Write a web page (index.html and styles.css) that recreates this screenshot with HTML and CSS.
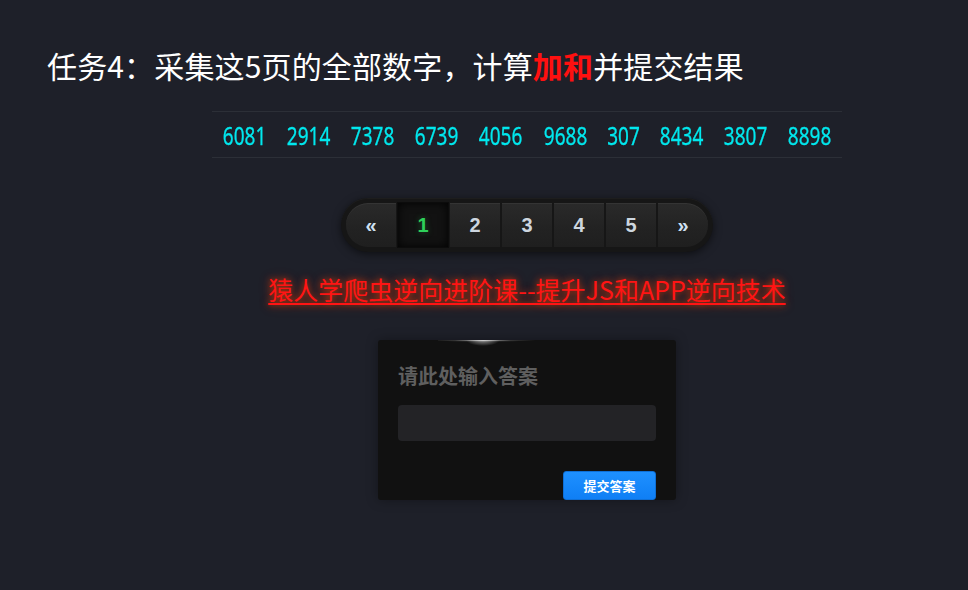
FILE: index.html
```html
<!DOCTYPE html>
<html lang="zh-CN">
<head>
<meta charset="utf-8">
<title>任务4</title>
<link rel="stylesheet" href="styles.css">
</head>
<body>
<h1 class="title">任务4：采集这5页的全部数字，计算<span class="hl">加和</span>并提交结果</h1>
<main class="main">
  <table class="nums">
    <tr>
      <td><span>6081</span></td>
      <td><span>2914</span></td>
      <td><span>7378</span></td>
      <td><span>6739</span></td>
      <td><span>4056</span></td>
      <td><span>9688</span></td>
      <td class="short"><span>307</span></td>
      <td><span>8434</span></td>
      <td><span>3807</span></td>
      <td><span>8898</span></td>
    </tr>
  </table>

  <nav class="pager">
    <a class="pg first">&laquo;</a>
    <a class="pg active">1</a>
    <a class="pg">2</a>
    <a class="pg">3</a>
    <a class="pg">4</a>
    <a class="pg">5</a>
    <a class="pg last">&raquo;</a>
  </nav>

  <a class="course">猿人学爬虫逆向进阶课--提升JS和APP逆向技术</a>

  <form class="card">
    <label class="card-label">请此处输入答案</label>
    <input class="card-input" type="text">
    <div class="card-foot">
      <button class="card-btn" type="button">提交答案</button>
    </div>
  </form>
</main>
</body>
</html>
```
FILE: styles.css
```css
* { box-sizing: border-box; }
html, body { margin: 0; padding: 0; }
body {
  background: #1e2029;
  font-family: "Noto Sans CJK SC", "Noto Sans", sans-serif;
  color: #fff;
  width: 968px;
  height: 590px;
  overflow: hidden;
}
.title {
  margin: 0;
  padding: 43px 0 0 47px;
  font-size: 30px;
  line-height: 44px;
  font-weight: 400;
  letter-spacing: 0.15px;
  color: #fff;
}
.hl { color: #ff1010; font-weight: 700; }

.main {
  padding-left: 86px;
  display: flex;
  flex-direction: column;
  align-items: center;
}

.nums {
  margin-top: 24px;
  width: 630px;
  border-collapse: collapse;
  table-layout: fixed;
}
.nums td {
  height: 46px;
  border-top: 1px solid #2c2f37;
  border-bottom: 1px solid #2c2f37;
  text-align: center;
  padding: 0;
  font-family: "Noto Sans", sans-serif;
  font-size: 25px;
  color: #00e8ee;
}
.nums td.short { width: 52px; }
.nums td span {
  display: inline-block;
  transform: scaleX(0.76);
  transform-origin: center;
  line-height: 30px;
  padding-top: 2px;
  -webkit-text-stroke: 0.3px #00e8ee;
}

.pager {
  margin-top: 40px;
  display: flex;
  gap: 2px;
  padding: 5px;
  background: #161616;
  border-radius: 28px;
  box-shadow: 0 2px 8px rgba(0,0,0,0.55), inset 0 1px 0 rgba(255,255,255,0.03);
}
.pg {
  width: 50px;
  height: 44px;
  display: flex;
  align-items: center;
  justify-content: center;
  background: linear-gradient(#2a2a2a, #222222 60%, #1f1f1f);
  color: #cdd6df;
  font-family: "Liberation Sans", Arial, sans-serif;
  font-weight: 700;
  font-size: 20px;
  box-shadow: inset 0 1px 0 rgba(255,255,255,0.05);
}
.pg.first { border-radius: 22px 0 0 22px; color: #cfe0f2; }
.pg.last { border-radius: 0 22px 22px 0; color: #cfe0f2; }
.pg.active {
  background: #121212;
  color: #2ed05a;
  box-shadow: inset 0 0 10px rgba(0,0,0,0.9), 0 0 0 1px #0c0c0c;
  text-shadow: 0 0 6px rgba(46,208,90,0.35);
}

.course {
  margin-top: 22px;
  font-size: 25px;
  line-height: 30px;
  color: #ff1414;
  text-decoration: underline;
  text-decoration-thickness: 2px;
  text-underline-offset: 3px;
  text-shadow: 0 0 6px rgba(255,60,0,0.7), 0 0 12px rgba(255,60,0,0.35);
}

.card {
  position: relative;
  margin-top: 36px;
  width: 298px;
  padding: 24px 20px 0;
  background: #111111;
  border-radius: 3px;
  box-shadow: 0 0 12px rgba(0,0,0,0.35);
  display: flex;
  flex-direction: column;
}
.card::before {
  content: "";
  position: absolute;
  top: 0;
  left: 60px;
  width: 100px;
  height: 2px;
  background: radial-gradient(ellipse at 45% 0%, rgba(255,255,255,0.85), rgba(255,255,255,0.15) 40%, rgba(255,255,255,0) 70%);
}
.card::after {
  content: "";
  position: absolute;
  top: 0;
  left: 88px;
  width: 34px;
  height: 6px;
  background: radial-gradient(ellipse at 50% 0%, rgba(255,255,255,0.55), rgba(255,255,255,0) 70%);
}
.card-label {
  font-size: 20px;
  line-height: 24px;
  font-weight: 700;
  color: #5f5f5f;
}
.card-input {
  margin-top: 17px;
  width: 258px;
  height: 36px;
  border: none;
  border-radius: 4px;
  background: #232326;
  outline: none;
}
.card-foot {
  margin-top: 30px;
  display: flex;
  justify-content: flex-end;
}
.card-btn {
  width: 93px;
  height: 29px;
  border: 1px solid #0e6fd6;
  border-radius: 3px;
  background: linear-gradient(#1e90ff, #0f7ff5);
  color: #fff;
  font-family: "Noto Sans CJK SC", sans-serif;
  font-size: 13px;
  font-weight: 700;
  padding: 0;
}
```
